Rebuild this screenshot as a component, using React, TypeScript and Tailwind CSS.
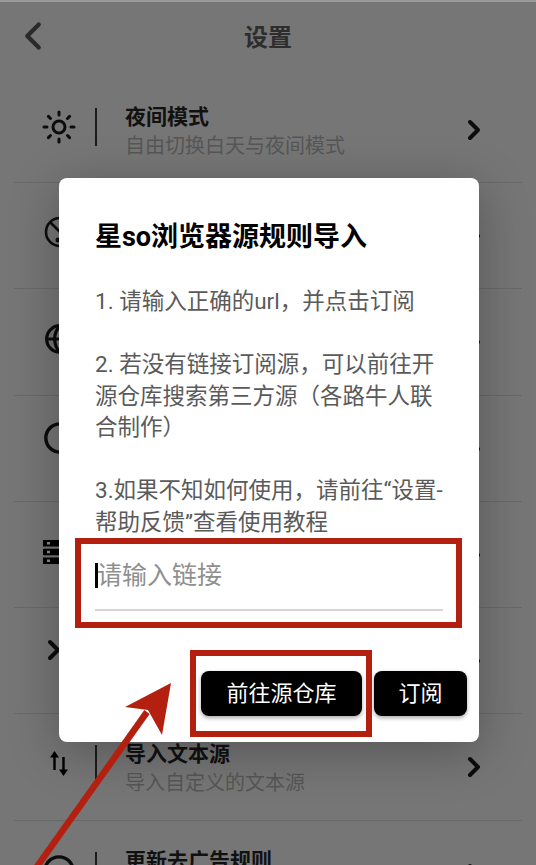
import { ChevronLeft, ChevronRight, Circle, Globe, Sun } from 'lucide-react'
import type { ReactNode } from 'react'

const font = "font-['Roboto','Noto_Sans_CJK_SC',sans-serif]"

function BlockedIcon() {
  return (
    <svg viewBox="0 0 32 32" className="h-[32px] w-[32px] -translate-y-[1px] translate-x-[1px]" fill="none" stroke="#0c0c0c" strokeWidth="2.6">
      <circle cx="16" cy="16" r="14" />
      <path d="M6 6 26 26" />
      <circle cx="14" cy="24" r="2.500" fill="#0c0c0c" stroke="none" />
    </svg>
  )
}

function ListIcon() {
  return (
    <svg viewBox="0 0 32 24" className="h-[24px] w-[32px]" fill="#000">
      <path d="M0 0h32v6.500H0zM0 8.750h32v6.500H0zM0 17.500h32V24H0z" />
      <path d="M4 2h3v2.500H4zM4 10.750h3v2.500H4zM4 19.500h3V22H4z" fill="#8a8a8a" />
    </svg>
  )
}

function SwapIcon() {
  return (
    <svg viewBox="0 0 18 25" className="h-[25px] w-[18px] -translate-y-[1px]">
      <path d="M4.500 19V5" stroke="#000" strokeWidth="2.400" fill="none" />
      <path d="M4.500 0 9 6.500H0Z" fill="#000" />
      <path d="M13.500 6v14" stroke="#000" strokeWidth="2.400" fill="none" />
      <path d="M13.500 25 9 18.500h9Z" fill="#000" />
    </svg>
  )
}

function Row({ icon, title, sub }: { icon: ReactNode; title?: string; sub?: string }) {
  return (
    <div className="mx-[14px] flex h-[106.3px] border-b border-[#696969]">
      <div className="ml-[16px] mt-[31px] flex h-[38px] w-[58px] shrink-0 items-center justify-center text-[#0c0c0c]">{icon}</div>
      <div className="ml-[7px] mt-[31px] h-[38px] w-[2px] shrink-0 bg-[#1c1c1c]" />
      <div className="ml-[28px] mt-[26px] min-w-0 flex-1">
        <div className="text-[21px] font-bold leading-[29px] text-[#111]">{title}</div>
        <div className="text-[20px] leading-[29px] text-[#565656]">{sub}</div>
      </div>
      <ChevronRight size={32} strokeWidth={3} className="mr-[32px] mt-[37px] shrink-0 text-[#0c0c0c]" />
    </div>
  )
}

function Arrow() {
  return (
    <svg viewBox="0 0 536 865" className="pointer-events-none absolute inset-0 h-[865px] w-[536px]">
      <path d="M36 868 147 712" stroke="#b3200f" strokeWidth="6.500" fill="none" />
      <path d="M171 683 125 707 148 710 162 735Z" fill="#b3200f" />
    </svg>
  )
}

export default function App() {
  return (
    <div className={`relative h-[865px] w-[536px] overflow-hidden bg-[#767676] ${font}`}>
      <div className="h-[2px] bg-[#9a9a9a]" />
      <div className="relative flex h-[74.7px] items-center justify-center pb-[2px]">
        <ChevronLeft size={46} strokeWidth={2.2} className="absolute left-[10px] top-[11px] text-[#2a2a2a]" />
        <span className="text-[24px] font-bold text-[#2e2e2e]">设置</span>
      </div>
      <Row icon={<Sun size={36} strokeWidth={2} />} title="夜间模式" sub="自由切换白天与夜间模式" />
      <Row icon={<BlockedIcon />} />
      <Row icon={<Globe size={32} strokeWidth={2.4} className="translate-x-[1px]" />} />
      <Row icon={<Circle size={34} strokeWidth={2.4} className="-translate-y-[8px] translate-x-[1px]" />} />
      <Row icon={<ListIcon />} />
      <Row icon={<ChevronRight size={32} strokeWidth={3} className="-translate-x-[5px] -translate-y-[8px]" />} />
      <Row icon={<SwapIcon />} title="导入文本源" sub="导入自定义的文本源" />
      <Row icon={<Circle size={34} strokeWidth={2.4} />} title="更新去广告规则" />

      <div className="absolute left-[59px] top-[178px] h-[564px] w-[420px] rounded-[8px] bg-white px-[36px] pt-[41px] shadow-[0_10px_50px_rgba(0,0,0,0.28)]">
        <h2 className="text-[27px] font-bold leading-[36px] text-black">星so浏览器源规则导入</h2>
        <div className="mt-[31px] flex w-[352px] flex-col gap-[31.5px] text-[22.5px] leading-[31.5px] text-[#5a5a5a]">
          <p>1. 请输入正确的url，并点击订阅</p>
          <p>2. 若没有链接订阅源，可以前往开源仓库搜索第三方源（各路牛人联合制作）</p>
          <p>3.如果不知如何使用，请前往“设置-帮助反馈”查看使用教程</p>
        </div>
        <div className="mt-[6px] flex h-[67px] w-[348px] items-start border-b-2 border-[#d6d6d6] pt-[19px]">
          <span className="h-[25px] w-[3px] shrink-0 bg-black" />
          <span className="-ml-[1px] text-[25px] leading-[25px] text-[#8f8f8f]">请输入链接</span>
        </div>
        <div className="-mr-[24px] mt-[60px] flex justify-end gap-[12px]">
          <button className="h-[45px] w-[161px] rounded-[8px] bg-black text-[22px] text-white shadow-[0_2px_4px_rgba(0,0,0,0.35)]">前往源仓库</button>
          <button className="h-[45px] w-[93px] rounded-[8px] bg-black text-[22px] text-white shadow-[0_2px_4px_rgba(0,0,0,0.35)]">订阅</button>
        </div>
      </div>

      <div className="absolute left-[75px] top-[538px] h-[90px] w-[387px] border-[6px] border-[#b3200f]" />
      <div className="absolute left-[190px] top-[650px] h-[87px] w-[182px] border-[6px] border-[#b3200f]" />
      <Arrow />
    </div>
  )
}
